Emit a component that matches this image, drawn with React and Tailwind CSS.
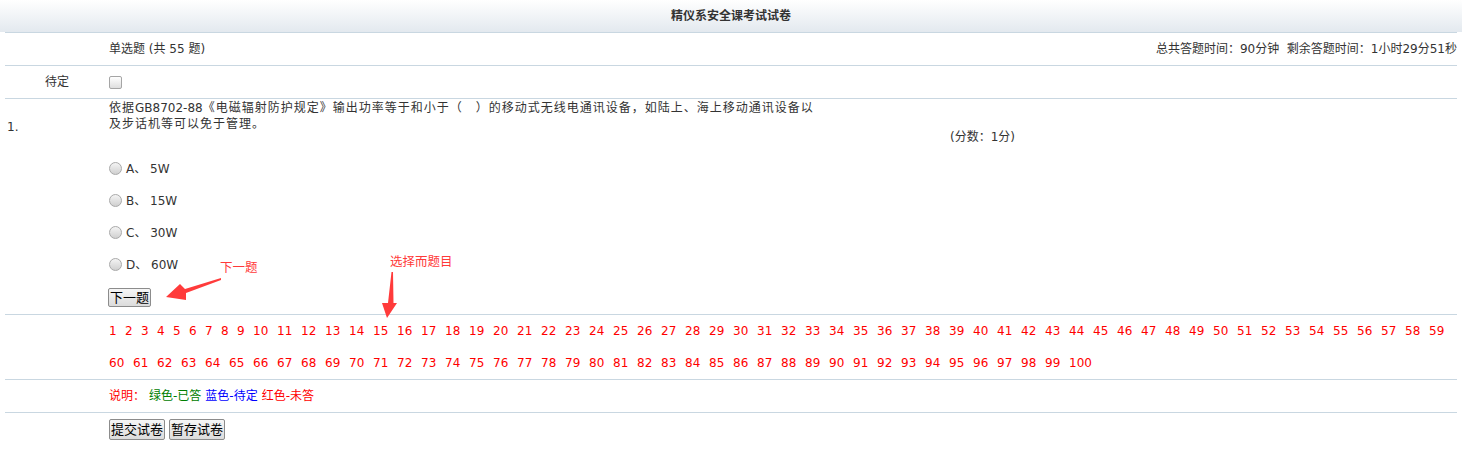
const nums = Array.from({ length: 100 }, (_, i) => i + 1);
const options = ['A、 5W', 'B、 15W', 'C、 30W', 'D、 60W'];

const Row = ({ label, className = '', labelClass = 'justify-center', children }) => (
  <div className={`grid grid-cols-[104px_1fr] border-b border-[#c9d7e1] ${className}`}>
    <div className={`flex ${labelClass}`}>{label}</div>
    <div>{children}</div>
  </div>
);

const OldButton = ({ children, className = '' }) => (
  <button
    className={`px-[1px] border border-[#8c8c8c] rounded-[2px] bg-linear-to-b from-[#f6f6f6] to-[#dcdcdc] text-[13px] leading-none text-black ${className}`}
  >
    {children}
  </button>
);

export default function App() {
  return (
    <div className="relative min-h-screen bg-white text-[12px] text-[#333] font-['DejaVu_Sans','Noto_Sans_CJK_SC',sans-serif]">
      {/* title bar */}
      <div className="h-8 flex items-center justify-center bg-linear-to-b from-white to-[#e3e9ef] font-bold">
        精仪系安全课考试试卷
      </div>

      <div className="mx-[5px] border-t border-[#c9d7e1]">
        <Row>
          <div className="h-8 flex items-center justify-between">
            <span>单选题 (共 55 题)</span>
            <span className="whitespace-nowrap">总共答题时间：90分钟&nbsp;&nbsp;剩余答题时间：1小时29分51秒</span>
          </div>
        </Row>

        <Row label={<span className="leading-8">待定</span>}>
          <div className="h-8 flex items-center">
            <span className="block w-[13px] h-[13px] rounded-[2px] border border-[#a5a5a5] bg-linear-to-b from-white to-[#dedede]" />
          </div>
        </Row>

        {/* question */}
        <Row
          labelClass="justify-start pl-[2px] pt-[20px]"
          label={<span className="leading-4">1.</span>}
        >
          <div className="pt-[1px] pb-[7px]">
            <div className="h-[53px] flex items-start">
              <p className="w-[841px] leading-4 whitespace-nowrap tracking-[1px]">
                依据<span className="tracking-normal">GB8702-88</span>《电磁辐射防护规定》输出功率等于和小于（　）的移动式无线电通讯设备，如陆上、海上移动通讯设备以
                <br />
                及步话机等可以免于管理。
              </p>
              <span className="pt-[29px] leading-4">(分数：1分)</span>
            </div>
            {options.map((o) => (
              <div key={o} className="h-8 flex items-center gap-[4px]">
                <span className="block w-[13px] h-[13px] -mt-[1px] rounded-full border border-[#a9a9a9] bg-linear-to-b from-[#f4f4f4] to-[#d0d0d0]" />
                <span className="whitespace-pre">{o}</span>
              </div>
            ))}
            <OldButton className="mt-[7px] h-[19px] -ml-[1px]">下一题</OldButton>
          </div>
        </Row>

        {/* question index */}
        <Row>
          <div className="flex flex-wrap text-[#ff0000]">
            {nums.map((n) => (
              <span
                key={n}
                className={`leading-8 ${n < 10 ? 'w-4' : n < 100 ? 'w-6' : 'w-8'}`}
              >
                {n}
              </span>
            ))}
          </div>
        </Row>

        <Row>
          <div className="h-8 flex items-center">
            <span className="text-[#ff0000]">说明：</span>
            <span className="text-[#008000] ml-[4px]">绿色-已答</span>
            <span className="text-[#0000ff] ml-[4px]">蓝色-待定</span>
            <span className="text-[#ff0000] ml-[4px]">红色-未答</span>
          </div>
        </Row>

        <div className="grid grid-cols-[104px_1fr] pt-[6px]">
          <div />
          <div className="flex gap-[4px]">
            <OldButton className="h-[21px]">提交试卷</OldButton>
            <OldButton className="h-[21px]">暂存试卷</OldButton>
          </div>
        </div>
      </div>

      {/* annotations */}
      <span className="absolute left-[220px] top-[260px] text-[12.5px] leading-4 text-[#ff3a3a]">下一题</span>
      <span className="absolute left-[390px] top-[254px] text-[12.5px] leading-4 text-[#ff3a3a]">选择而题目</span>
      <svg className="absolute left-0 top-0 pointer-events-none" width="1462" height="458">
        <polygon
          points="221,278 185,289 180,284 166,297 186,300 186,293 221,280"
          fill="#ff3b3b"
        />
        <polygon
          points="391.5,272 393,272 393.5,303 397,303 387,318 382,303 388,303"
          fill="#ff3b3b"
        />
      </svg>
    </div>
  );
}
